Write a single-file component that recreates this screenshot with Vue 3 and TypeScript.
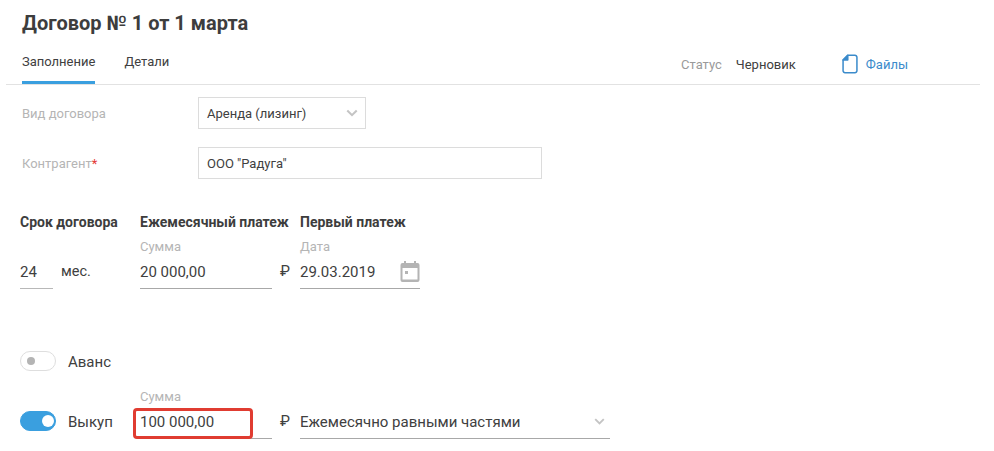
<template>
  <div class="page">
    <h1 class="title">Договор № 1 от 1 марта</h1>

    <div class="tabs">
      <a class="tab active">Заполнение</a>
      <a class="tab">Детали</a>
      <div class="status">
        <span class="status-label">Статус</span>
        <span class="status-value">Черновик</span>
        <a class="files">
          <svg width="16" height="20" viewBox="0 0 18 22" fill="none" stroke="#3b8bcb" stroke-width="1.7">
            <path d="M6.5 1.2H14.5A2.2 2.2 0 0 1 16.8 3.4V18.6A2.2 2.2 0 0 1 14.5 20.8H3.5A2.2 2.2 0 0 1 1.2 18.6V6.5Z" stroke-linejoin="round" />
            <path d="M1.2 6.5H6.5V1.2Z" fill="#3b8bcb" stroke-linejoin="round" />
          </svg>
          <span>Файлы</span>
        </a>
      </div>
    </div>

    <div class="form-row first">
      <label class="form-label">Вид договора</label>
      <div class="box select-box">
        <span>Аренда (лизинг)</span>
        <svg class="chevron" width="12" height="8" viewBox="0 0 14 9" fill="none" stroke="#c4c4c4" stroke-width="2.4">
          <path d="M1.5 1.5L7 7L12.5 1.5" />
        </svg>
      </div>
    </div>
    <div class="form-row second">
      <label class="form-label">Контрагент<em>*</em></label>
      <div class="box input-box">ООО "Радуга"</div>
    </div>

    <div class="terms">
      <div class="col col-term">
        <h3>Срок договора</h3>
        <div class="term-line">
          <div class="field term-field"><span>24</span></div>
          <span class="unit">мес.</span>
        </div>
      </div>
      <div class="col col-sum">
        <h3>Ежемесячный платеж</h3>
        <div class="caption">Сумма</div>
        <div class="field sum-field"><span>20 000,00</span></div>
      </div>
      <div class="rub">₽</div>
      <div class="col col-date">
        <h3>Первый платеж</h3>
        <div class="caption">Дата</div>
        <div class="field date-field">
          <span>29.03.2019</span>
          <svg width="20" height="21" viewBox="0 0 20 21">
            <path fill="#b4b4b4" fill-rule="evenodd" d="M4 0h2v2h8V0h2v2h1.500a2 2 0 0 1 2 2v15a2 2 0 0 1-2 2h-15a2 2 0 0 1-2-2V4a2 2 0 0 1 2-2H4ZM2.500 7V18.500h15V7ZM5 10h3v3H5Z" />
          </svg>
        </div>
      </div>
    </div>

    <div class="avans">
      <div class="toggle"><i></i></div>
      <span class="avans-label">Аванс</span>
    </div>

    <div class="buyout">
      <div class="toggle on"><i></i></div>
      <span class="buyout-label">Выкуп</span>
      <div class="col col-sum">
        <div class="caption">Сумма</div>
        <div class="field sum-field highlighted">
          <span>100 000,00</span>
          <div class="red-frame"></div>
        </div>
      </div>
      <div class="rub">₽</div>
      <div class="field plan-field">
        <span>Ежемесячно равными частями</span>
        <svg width="11" height="7" viewBox="0 0 14 9" fill="none" stroke="#c4c4c4" stroke-width="2.400">
          <path d="M1.500 1.500L7 7L12.500 1.500" />
        </svg>
      </div>
    </div>
  </div>
</template>

<script setup lang="ts">
</script>

<style>
html,
body {
  background: #fff;
}
</style>

<style scoped>
.page {
  width: 994px;
  height: 451px;
  overflow: hidden;
  box-sizing: border-box;
  padding-top: 12px;
  font-family: Roboto, "Liberation Sans", sans-serif;
  font-size: 15px;
  color: #404040;
}

.title {
  margin: 0 0 0 22px;
  font-size: 20px;
  line-height: 22px;
  font-weight: 700;
  color: #3d3d3d;
}

.tabs {
  display: flex;
  align-items: flex-start;
  height: 51px;
  margin: 0 14px 0 6px;
  padding-left: 16px;
  border-bottom: 1px solid #e2e2e2;
  box-sizing: border-box;
}

.tab {
  height: 50px;
  box-sizing: border-box;
  padding-top: 20px;
  font-size: 13px;
  line-height: 16px;
  margin-right: 29px;
}

.tab.active {
  height: 50px;
  border-bottom: 3px solid #3a9fdf;
}

.status {
  display: flex;
  align-items: center;
  height: 22px;
  margin-top: 19px;
  margin-left: auto;
  font-size: 13px;
}

.status-label {
  color: #9a9a9a;
  margin-right: 14px;
}

.status-value {
  margin-right: 46px;
}

.files {
  display: flex;
  align-items: center;
  gap: 8px;
  color: #3b8bcb;
  margin-right: 72px;
}

.form-row {
  display: flex;
  align-items: center;
  padding-left: 22px;
}

.form-row.first {
  margin-top: 12px;
}

.form-row.second {
  margin-top: 18px;
}

.form-label {
  width: 176px;
  font-size: 13px;
  color: #b5b5b5;
}

.form-label em {
  color: #e53935;
  font-style: normal;
}

.box {
  display: flex;
  align-items: center;
  justify-content: space-between;
  height: 32px;
  box-sizing: border-box;
  border: 1px solid #dcdcdc;
  padding: 0 8px;
  font-size: 13px;
}

.select-box {
  width: 168px;
}

.input-box {
  width: 344px;
}

.chevron {
  margin-right: -1px;
}

.terms {
  display: flex;
  margin-top: 35px;
  padding-left: 20px;
}

.col h3 {
  margin: 0;
  font-size: 14px;
  line-height: 16px;
  font-weight: 700;
  color: #3d3d3d;
  white-space: nowrap;
}

.col-term {
  width: 120px;
}

.col-sum {
  width: 132px;
}

.col-date {
  width: 120px;
}

.caption {
  margin-top: 9px;
  font-size: 13px;
  line-height: 16px;
  color: #b5b5b5;
}

.term-line {
  display: flex;
  align-items: flex-end;
  margin-top: 25px;
}

.field {
  display: flex;
  align-items: center;
  height: 34px;
  box-sizing: border-box;
  border-bottom: 1px solid #a8a8a8;
  font-size: 15px;
}

.term-field {
  width: 33px;
  border-bottom-color: #b8b8b8;
}

.unit {
  margin-left: 8px;
  padding-bottom: 9px;
  font-size: 14.5px;
}

.rub {
  width: 28px;
  box-sizing: border-box;
  padding-left: 8px;
  align-self: flex-end;
  padding-bottom: 9px;
  font-size: 15px;
  line-height: 17px;
}

.date-field {
  justify-content: space-between;
}

.avans {
  display: flex;
  align-items: center;
  gap: 12px;
  margin-top: 62px;
  padding-left: 20px;
}

.avans-label {
  padding-top: 2px;
}

.toggle {
  position: relative;
  width: 36px;
  height: 20px;
  box-sizing: border-box;
  border: 1px solid #dedede;
  border-radius: 10px;
  background: #fff;
}

.toggle i {
  position: absolute;
  left: 6px;
  top: 5px;
  width: 8px;
  height: 8px;
  border-radius: 50%;
  background: #b4b4b4;
}

.toggle.on {
  border-color: #3a9fdf;
  background: #3a9fdf;
}

.toggle.on i {
  left: 21px;
  top: 3px;
  width: 12px;
  height: 12px;
  background: #fff;
}

.buyout {
  display: flex;
  align-items: flex-end;
  margin-top: 18px;
  padding-left: 20px;
}

.buyout .caption {
  margin-top: 0;
}

.buyout > .toggle {
  margin-bottom: 8px;
}

.buyout-label {
  width: 84px;
  box-sizing: border-box;
  padding-left: 12px;
  padding-bottom: 8px;
  line-height: 17px;
}

.highlighted {
  position: relative;
}

.red-frame {
  position: absolute;
  left: -7px;
  top: 3px;
  width: 120px;
  height: 31px;
  box-sizing: border-box;
  border: 3px solid #e03c31;
  border-radius: 4px;
}

.plan-field {
  width: 310px;
  justify-content: space-between;
  padding-right: 5px;
}
</style>
